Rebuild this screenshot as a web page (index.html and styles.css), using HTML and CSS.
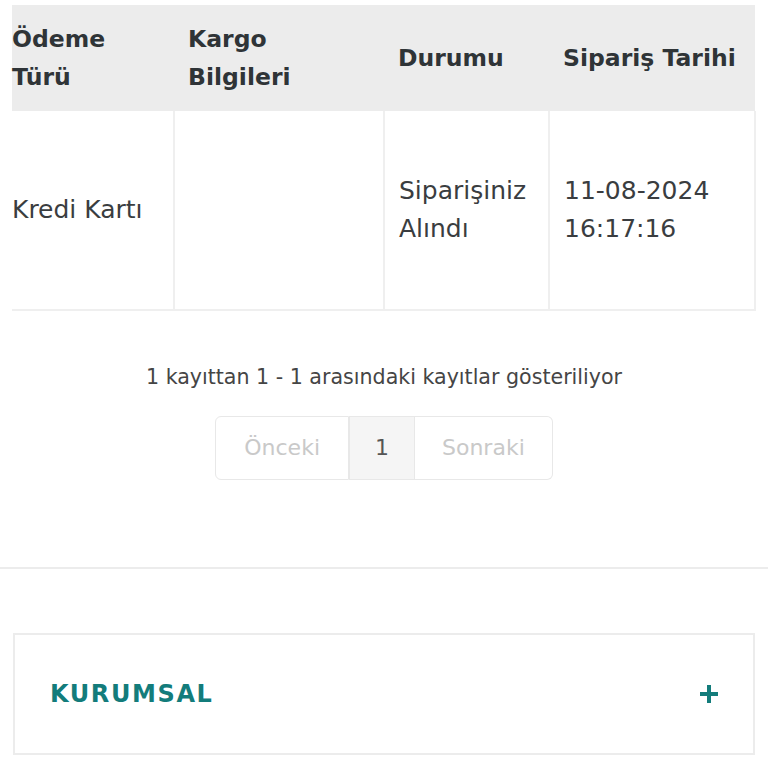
FILE: index.html
```html
<!DOCTYPE html>
<html lang="tr">
<head>
    <meta charset="UTF-8">
    <meta name="viewport" content="width=device-width, initial-scale=1.0">
    <title>Siparişlerim</title>
    <link rel="stylesheet" href="styles.css">
</head>
<body>

<div class="orders">
    <div class="table-wrap">
        <table class="order-table">
            <thead>
                <tr>
                    <th class="col-pay">Ödeme<br>Türü</th>
                    <th class="col-cargo">Kargo<br>Bilgileri</th>
                    <th class="col-status">Durumu</th>
                    <th class="col-date">Sipariş Tarihi</th>
                </tr>
            </thead>
            <tbody>
                <tr>
                    <td class="col-pay">Kredi Kartı</td>
                    <td class="col-cargo"></td>
                    <td class="col-status">Siparişiniz<br>Alındı</td>
                    <td class="col-date">11-08-2024<br>16:17:16</td>
                </tr>
            </tbody>
        </table>
    </div>

    <p class="info">1 kayıttan 1 - 1 arasındaki kayıtlar gösteriliyor</p>

    <div class="pager">
        <span class="page disabled">Önceki</span>
        <span class="page active">1</span>
        <span class="page disabled">Sonraki</span>
    </div>
</div>

<div class="footer-menu">
    <div class="accordion">
        <span class="accordion-title">KURUMSAL</span>
        <svg class="plus" width="20" height="20" viewBox="0 0 20 20">
            <path d="M10 1v18M1 10h18" stroke="#137c7b" stroke-width="4" fill="none"/>
        </svg>
    </div>
</div>

</body>
</html>
```

FILE: styles.css
```css
body {
    margin: 0;
    padding-top: 5px;
    font-family: "DejaVu Sans", sans-serif;
    color: #3a3d40;
    background: #fff;
}
.orders {
    padding-bottom: 87px;
    border-bottom: 2px solid #ececec;
}
.table-wrap {
    margin: 0 13px 0 12px;
}
.order-table {
    width: 100%;
    border-collapse: collapse;
    table-layout: fixed;
}
.order-table th {
    background-color: #ececec;
    font-size: 23.5px;
    font-weight: bold;
    line-height: 38px;
    color: #2f3437;
    text-align: left;
    height: 106px;
    padding: 0 14px;
    box-sizing: border-box;
}
.order-table td {
    font-size: 25px;
    line-height: 38px;
    height: 198px;
    padding: 0 14px;
    vertical-align: middle;
    border-left: 2px solid #efefef;
    border-bottom: 2px solid #efefef;
}
.order-table td:last-child {
    border-right: 2px solid #efefef;
}
.order-table .col-pay {
    padding-left: 0;
    border-left: none;
}
.col-pay { width: 162px; }
.col-cargo { width: 210px; }
.col-status { width: 165px; }
.col-date { width: 206px; }
.info {
    margin: 50px 0 22px;
    text-align: center;
    font-size: 20.6px;
    line-height: 33px;
    color: #454545;
}
.pager {
    display: flex;
    justify-content: center;
}
.page {
    font-size: 22px;
    line-height: 32px;
    padding: 15px 28px;
    border: 1px solid #e8e8e8;
    color: #c9c9c9;
}
.page + .page {
    border-left: none;
}
.page:first-child {
    border-radius: 6px 0 0 6px;
}
.page:last-child {
    padding: 15px 27px;
    border-radius: 0 6px 6px 0;
}
.page.active {
    background-color: #f5f5f5;
    color: #555;
    padding: 15px 25px;
    border-left: 1px solid #e8e8e8;
    border-right: 1px solid #e8e8e8;
}
.footer-menu {
    padding: 64px 13px 20px 13px;
}
.accordion {
    display: flex;
    align-items: center;
    justify-content: space-between;
    border: 2px solid #ececec;
    padding: 0 34px 0 35px;
    height: 122px;
    box-sizing: border-box;
}
.accordion-title {
    font-size: 24px;
    font-weight: bold;
    letter-spacing: 1.6px;
    color: #137c7b;
}
```
